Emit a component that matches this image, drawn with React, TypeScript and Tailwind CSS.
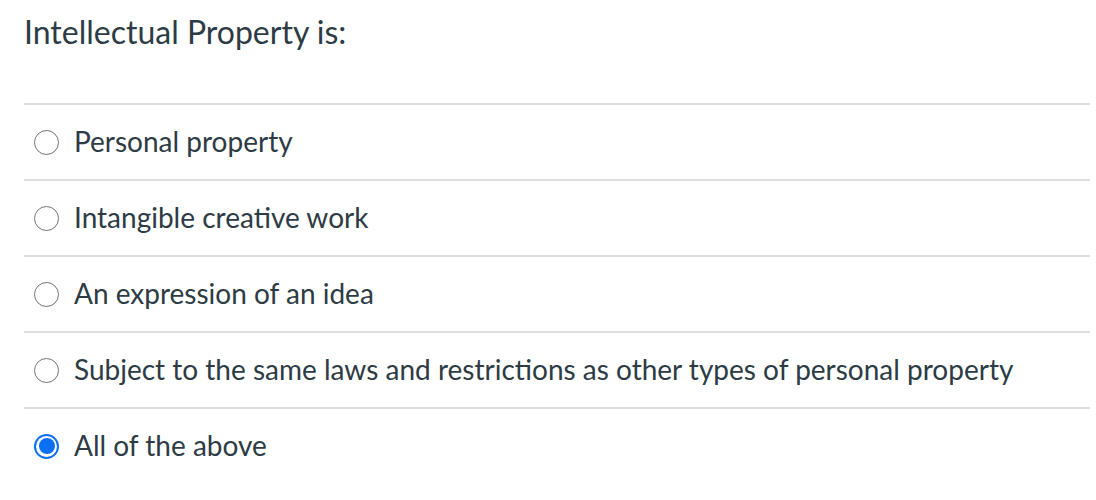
const OPTIONS = [
  "Personal property",
  "Intangible creative work",
  "An expression of an idea",
  "Subject to the same laws and restrictions as other types of personal property",
  "All of the above",
];

function Radio({ checked }: { checked: boolean }) {
  if (checked) {
    return (
      <span className="flex h-[25px] w-[25px] shrink-0 items-center justify-center rounded-full border-[2px] border-[#0b6ff5] bg-white">
        <span className="h-[16px] w-[16px] rounded-full bg-[#0b6ff5]" />
      </span>
    );
  }
  return <span className="h-[25px] w-[25px] shrink-0 rounded-full border-[1.5px] border-[#737373] bg-white" />;
}

export default function App() {
  return (
    <div className="h-[500px] w-[1096px] bg-white pl-[24px] pr-[6px] text-[#2d3b45]" style={{ fontFamily: "Lato, 'Noto Sans', sans-serif" }}>
      <div className="flex h-[103px] items-start pt-[10px]">
        <h1 className="text-[32px] leading-[44px]">Intellectual Property is:</h1>
      </div>
      {OPTIONS.map((opt, i) => (
        <div key={opt} className="flex h-[76px] items-center gap-[15px] border-t-2 border-[#dddddd] pl-[10px]">
          <Radio checked={i === OPTIONS.length - 1} />
          <span className="pb-[3px] text-[28px] leading-[38px]">{opt}</span>
        </div>
      ))}
    </div>
  );
}
